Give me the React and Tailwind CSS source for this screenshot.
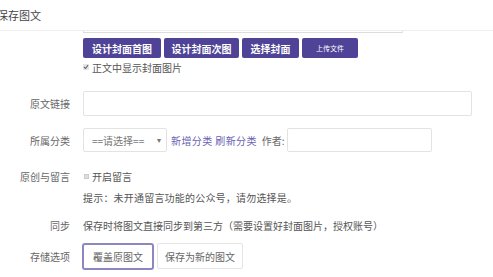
export default function App() {
  const font = { fontFamily: '"Noto Sans CJK SC", "Noto Sans", sans-serif' };
  return (
    <div className="w-[493px] h-[277px] bg-white overflow-hidden text-[10px] text-[#555]" style={font}>
      <div className="h-[31px] border-b border-[#eeeeee] flex items-center">
        <span className="-ml-[3px] text-[11px] text-[#444]">保存图文</span>
      </div>
      <div className="flex">
        <div className="w-[83px] shrink-0" />
        <div className="flex flex-col">
          <div className="w-[320px] h-[2px] border-x border-b border-[#dddddd]" />
          <div className="flex gap-[3px] mt-[5px]">
            <button className="h-[20px] w-[78px] rounded-[2px] bg-[#4e4396] text-white text-[10px] font-semibold">设计封面首图</button>
            <button className="h-[20px] w-[75px] rounded-[2px] bg-[#4e4396] text-white text-[10px] font-semibold">设计封面次图</button>
            <button className="h-[20px] w-[57px] rounded-[2px] bg-[#4e4396] text-white text-[10px] font-semibold">选择封面</button>
            <button className="h-[20px] w-[56px] rounded-[2px] bg-[#4e4396] text-white text-[7px]">上传文件</button>
          </div>
          <div className="flex items-center mt-[2px] h-[14px]">
            <svg width="6" height="6" viewBox="0 0 6 6" className="mr-[3px]">
              <rect x="0" y="0" width="6" height="6" fill="#e5e5e5" />
              <path d="M1 3 L2.5 4.5 L5 1.2" stroke="#666" strokeWidth="1.1" fill="none" />
            </svg>
            <span className="text-[10px] text-[#555]">正文中显示封面图片</span>
          </div>
        </div>
      </div>

      <div className="flex items-center mt-[17px] h-[25px]">
        <div className="w-[70px] text-right text-[#666]">原文链接</div>
        <div className="ml-[13px] w-[389px] h-[25px] border border-[#e3e3e3] rounded-[2px]" />
      </div>

      <div className="flex items-center mt-[12px] h-[24px]">
        <div className="w-[70px] text-right text-[#666]">所属分类</div>
        <div className="ml-[13px] w-[84px] h-[24px] border border-[#e3e3e3] rounded-[2px] flex items-center pl-[8px] pr-[5px] justify-between text-[#777]">
          <span>==请选择==</span>
          <span className="text-[8px]">▾</span>
        </div>
        <span className="ml-[4px] text-[#6a5fb5] tracking-[0.4px]">新增分类 刷新分类</span>
        <span className="ml-[5px] text-[#666]">作者:</span>
        <div className="ml-[2px] w-[145px] h-[24px] border border-[#e3e3e3] rounded-[2px]" />
      </div>

      <div className="flex items-center mt-[14px] h-[20px]">
        <div className="w-[70px] text-right text-[#666]">原创与留言</div>
        <span className="ml-[14px] w-[5px] h-[5px] bg-[#dddddd] border border-[#cccccc]" />
        <span className="ml-[3px] text-[#555]">开启留言</span>
      </div>

      <div className="flex items-center mt-[1px] h-[20px]">
        <div className="ml-[83px] text-[#555] tracking-[0.2px]">提示：未开通留言功能的公众号，请勿选择是。</div>
      </div>

      <div className="flex items-center mt-[8px] h-[20px]">
        <div className="w-[70px] text-right text-[#666]">同步</div>
        <div className="ml-[13px] text-[#555]">保存时将图文直接同步到第三方（需要设置好封面图片，授权账号）</div>
      </div>

      <div className="flex items-center mt-[8px]">
        <div className="w-[70px] text-right text-[#666]">存储选项</div>
        <div className="ml-[12px] flex gap-[3px]">
          <div className="w-[72px] h-[27px] border-2 border-[#8d86c0] rounded-[3px] flex items-center justify-center text-[#666]">覆盖原图文</div>
          <div className="w-[86px] h-[26px] border border-[#e5e5e5] rounded-[2px] flex items-center justify-center text-[#666]">保存为新的图文</div>
        </div>
      </div>
    </div>
  );
}
